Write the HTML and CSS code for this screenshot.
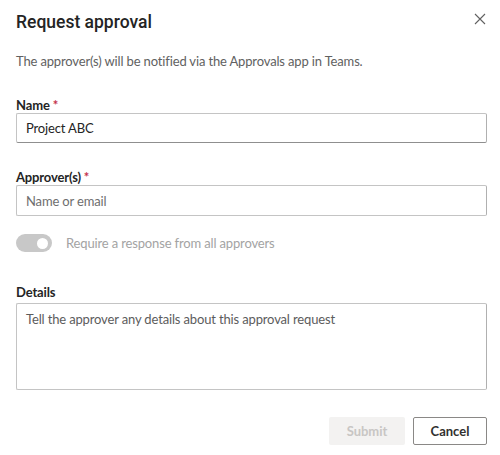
FILE: index.html
```html
<!DOCTYPE html>
<html lang="en">

<head>
    <meta charset="UTF-8">
    <meta name="viewport" content="width=device-width, initial-scale=1.0">
    <title>Request approval</title>
    <link rel="stylesheet" href="styles.css">
</head>

<body>
    <div class="dialog">
        <div class="dialog-header">
            <h1>Request approval</h1>
            <button class="close" aria-label="Close">
                <svg width="12" height="12" viewBox="0 0 12 12">
                    <path d="M1 1 L11 11 M11 1 L1 11" stroke="#616161" stroke-width="1.1" fill="none" />
                </svg>
            </button>
        </div>
        <p class="intro">The approver(s) will be notified via the Approvals app in Teams.</p>

        <div class="field first">
            <label for="nameInput">Name <span class="req">*</span></label>
            <input type="text" id="nameInput" value="Project ABC">
        </div>

        <div class="field">
            <label for="approverInput">Approver(s) <span class="req">*</span></label>
            <input type="text" id="approverInput" placeholder="Name or email">
        </div>

        <div class="toggle-row">
            <span class="toggle"><span class="knob"></span></span>
            <span class="toggle-label">Require a response from all approvers</span>
        </div>

        <div class="field details">
            <label for="detailsInput">Details</label>
            <textarea id="detailsInput" placeholder="Tell the approver any details about this approval request"></textarea>
        </div>

        <div class="actions">
            <button class="btn submit" disabled>Submit</button>
            <button class="btn cancel">Cancel</button>
        </div>
    </div>
</body>

</html>
```

FILE: styles.css
```css
body {
    margin: 0;
    font-family: Lato, "Open Sans", sans-serif;
    background: #fff;
    color: #242424;
    letter-spacing: -0.15px;
}

.dialog {
    padding: 11px 13px 0 16px;
}

.dialog-header {
    display: flex;
    justify-content: space-between;
    align-items: center;
}

h1 {
    margin: 0;
    font-family: Roboto, Lato, sans-serif;
    font-size: 17.5px;
    font-weight: 500;
    line-height: 22px;
    letter-spacing: 0;
}

.close {
    border: none;
    background: none;
    padding: 0;
    width: 14px;
    height: 14px;
    margin-top: -4px;
}

.intro {
    margin: 19px 0 0;
    font-size: 13px;
    color: #616161;
    line-height: 18px;
}

.field {
    margin-top: 25px;
}

.field.first {
    margin-top: 26px;
}

label {
    display: block;
    font-size: 13px;
    font-weight: 700;
    line-height: 18px;
    margin-bottom: -1px;
}

.req {
    color: #c4314b;
}

input[type="text"],
textarea {
    display: block;
    box-sizing: border-box;
    width: 100%;
    height: 30px;
    padding: 0 9px;
    border: 1px solid #c4c4c4;
    border-right-color: #b0b0b0;
    border-radius: 2px;
    font-family: inherit;
    font-size: 13px;
    letter-spacing: inherit;
    color: #242424;
    outline: none;
}

#nameInput {
    border-bottom-color: #8f8f8f;
}

#approverInput {
    height: 31px;
}

::placeholder {
    color: #6e6e6e;
}

textarea::placeholder {
    color: #5c5c5c;
}

.toggle-row {
    display: flex;
    align-items: center;
    margin-top: 18px;
    height: 18px;
}

.toggle {
    display: flex;
    align-items: center;
    justify-content: flex-end;
    box-sizing: border-box;
    width: 36px;
    height: 18px;
    padding: 0 4px;
    border-radius: 9px;
    background: #c8c8c8;
}

.knob {
    width: 11px;
    height: 11px;
    border-radius: 50%;
    background: #fff;
}

.toggle-label {
    margin-left: 14px;
    font-size: 13px;
    color: #a3a3a3;
}

.details {
    margin-top: 31px;
}

.details label {
    margin-bottom: 2px;
}

textarea {
    height: 87px;
    padding: 6px 9px;
    resize: none;
    line-height: 18px;
}

.actions {
    display: flex;
    justify-content: flex-end;
    gap: 8px;
    margin-top: 27px;
}

.btn {
    box-sizing: border-box;
    height: 28px;
    min-width: 74px;
    padding: 0 14px;
    border-radius: 2px;
    font-family: inherit;
    font-size: 13px;
    font-weight: 700;
}

.submit {
    border: none;
    width: 76px;
    background: #f3f2f1;
    color: #c8c6c4;
}

.cancel {
    border: 1px solid #8a8886;
    background: #fff;
    color: #323130;
}
```
